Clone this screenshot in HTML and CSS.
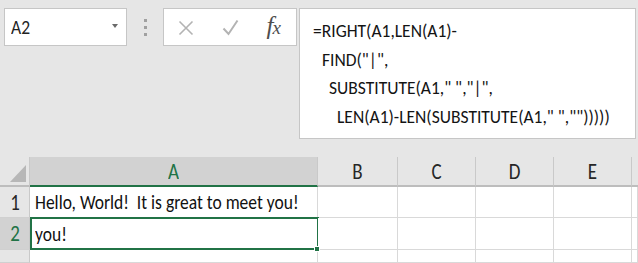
FILE: index.html
```html
<!DOCTYPE html>
<html lang="en">
<head>
<meta charset="utf-8">
<title>Excel formula</title>
<link rel="stylesheet" href="styles.css">
</head>
<body>
<div class="toolbar">
  <div class="namebox">
    <span class="namebox-text tall">A2</span>
    <span class="namebox-arrow"></span>
  </div>
  <div class="grip"><span></span><span></span><span></span></div>
  <div class="fxbox">
    <svg class="ico" width="16" height="16" viewBox="0 0 16 16"><path d="M1.5 1.5 L14.5 14.5 M14.5 1.5 L1.5 14.5" stroke="#b3b3b3" stroke-width="1.6" fill="none"/></svg>
    <svg class="ico" width="17" height="17" viewBox="0 0 17 17"><path d="M1.5 9.5 L6.5 15 L15.5 1.5" stroke="#b3b3b3" stroke-width="2" fill="none" stroke-linejoin="miter"/></svg>
    <span class="fx"><i>f</i><i class="fx-x">x</i></span>
  </div>
  <div class="formula">
    <div class="fline l1">=RIGHT(A1,LEN(A1)-</div>
    <div class="fline l2">FIND("|",</div>
    <div class="fline l3">SUBSTITUTE(A1," ","|",</div>
    <div class="fline l4">LEN(A1)-LEN(SUBSTITUTE(A1," ","")))))</div>
  </div>
</div>

<div class="sheet">
  <div class="corner"><span class="corner-tri"></span></div>
  <div class="colhead sel"><span class="tall">A</span></div>
  <div class="colhead"><span class="tall">B</span></div>
  <div class="colhead"><span class="tall">C</span></div>
  <div class="colhead"><span class="tall">D</span></div>
  <div class="colhead"><span class="tall">E</span></div>
  <div class="colhead last"></div>

  <div class="rowhead"><span class="tall">1</span></div>
  <div class="cell"><span class="celltext tall">Hello, World!&nbsp; It is great to meet you!</span></div>
  <div class="cell"></div><div class="cell"></div><div class="cell"></div><div class="cell"></div><div class="cell"></div>

  <div class="rowhead sel"><span class="tall">2</span></div>
  <div class="cell active"><span class="celltext tall">you!</span><span class="handle"></span></div>
  <div class="cell"></div><div class="cell"></div><div class="cell"></div><div class="cell"></div><div class="cell"></div>

  <div class="rowhead r3"><span class="tall">3</span></div>
  <div class="cell"></div><div class="cell"></div><div class="cell"></div><div class="cell"></div><div class="cell"></div><div class="cell"></div>
</div>
</body>
</html>
```
FILE: styles.css
```css
* { box-sizing: border-box; }
html, body { margin: 0; padding: 0; }
body {
  width: 638px;
  height: 263px;
  overflow: hidden;
  background: #e6e6e6;
  font-family: Carlito, "Liberation Sans", sans-serif;
  color: #1e1e1e;
}
.tall { display: inline-block; transform: scaleY(1.2); }

/* ---------- toolbar ---------- */
.toolbar {
  display: flex;
  align-items: flex-start;
  padding: 8px 2px 0 4px;
  height: 139px;
}
.namebox {
  width: 123px;
  height: 38px;
  background: #fff;
  border: 1px solid #c6c6c6;
  display: flex;
  align-items: center;
  justify-content: space-between;
  padding: 0 8px 0 6px;
}
.namebox-text { font-size: 17.5px; color: #222; transform: scaleY(1.22); }
.namebox-arrow {
  width: 0; height: 0;
  border-left: 3.5px solid transparent;
  border-right: 3.5px solid transparent;
  border-top: 4px solid #6a6a6a;
  margin-top: -2px;
}
.grip {
  width: 36px;
  height: 38px;
  display: flex;
  flex-direction: column;
  align-items: center;
  justify-content: center;
  gap: 4px;
}
.grip span { width: 3px; height: 3px; background: #a0a0a0; }
.fxbox {
  width: 134px;
  height: 38px;
  background: #fff;
  border: 1px solid #c6c6c6;
  display: flex;
  align-items: center;
  padding: 0 15px 0 14px;
  justify-content: space-between;
  margin-right: 2px;
}
.fxbox .ico { display: block; margin-top: 1px; }
.fx {
  font-family: "Liberation Serif", serif;
  font-size: 25px;
  color: #4e4e4e;
  line-height: 1;
  margin-top: -3px;
}
.fx i { font-style: italic; }
.fx-x { font-size: 19px; margin-left: -1px; }
.formula {
  width: 337px;
  height: 131px;
  background: #fff;
  border: 1px solid #c6c6c6;
  padding: 8px 0 0 13px;
  font-size: 17.5px;
  line-height: 28.7px;
  color: #141414;
}
.fline { white-space: pre; }
.l2 { padding-left: 9px; }
.l3 { padding-left: 16px; }
.l4 { padding-left: 24px; }

/* ---------- sheet ---------- */
.sheet {
  margin-top: 18px;
  display: grid;
  grid-template-columns: 30px 288px 80px 78px 78px 78px 1fr;
  grid-template-rows: 30px 31px 32px 13px;
  overflow: hidden;
}
.corner {
  background: #e6e6e6;
  border-right: 1px solid #c9c9c9;
  border-bottom: 2px solid #bdbdbd;
  position: relative;
}
.corner-tri {
  position: absolute;
  right: 3px;
  bottom: 3px;
  width: 0; height: 0;
  border-left: 16px solid transparent;
  border-bottom: 17px solid #b7b7b7;
}
.colhead {
  background: #e6e6e6;
  border-right: 1px solid #c9c9c9;
  border-bottom: 2px solid #bdbdbd;
  display: flex;
  align-items: center;
  justify-content: center;
  font-size: 19px;
  color: #262626;
}
.colhead.sel { background: #d2d2d2; border-bottom-color: #217346; color: #217346; }
.colhead.last { border-right: none; }
.rowhead {
  background: #e6e6e6;
  border-right: 1px solid #c9c9c9;
  border-bottom: 1px solid #d0d0d0;
  display: flex;
  align-items: center;
  justify-content: center;
  font-size: 19px;
  color: #262626;
  padding-left: 1px;
}
.rowhead.sel { background: #d2d2d2; color: #217346; }
.rowhead.r3 { align-items: flex-start; padding-top: 9px; }
.cell {
  background: #fff;
  border-right: 1px solid #d9d9d9;
  border-bottom: 1px solid #d9d9d9;
  display: flex;
  align-items: center;
  padding-left: 5px;
  font-size: 17.5px;
  color: #111;
  white-space: nowrap;
  position: relative;
}
.celltext { transform: scaleY(1.17); }
.cell.active::after {
  content: "";
  position: absolute;
  left: 0;
  top: -1px;
  right: -2px;
  bottom: -1px;
  border: 2px solid #217346;
}
.handle {
  position: absolute;
  right: -3px;
  bottom: -3px;
  width: 6px;
  height: 6px;
  background: #217346;
  border: 1px solid #fff;
  z-index: 2;
}
```
